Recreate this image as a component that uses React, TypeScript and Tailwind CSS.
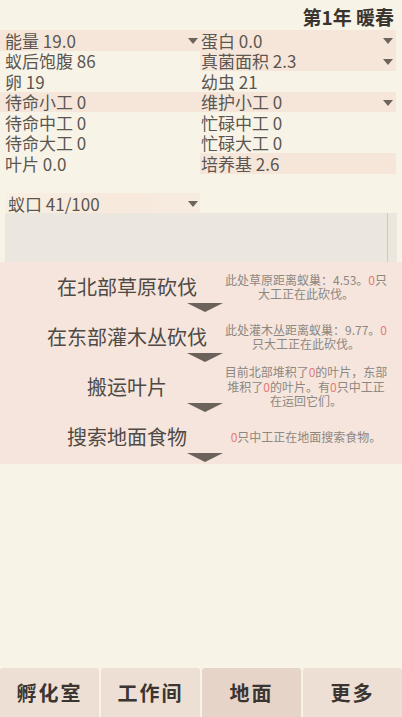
import React from "react";

const Tri = () => (
  <svg width="10" height="6" viewBox="0 0 10 6" className="block">
    <polygon points="0,0 10,0 5,6" fill="#6d655d" />
  </svg>
);

type Cell = { text: string; pink?: boolean; drop?: boolean };

const rows: [Cell, Cell][] = [
  [
    { text: "能量 19.0", pink: true, drop: true },
    { text: "蛋白 0.0", pink: true, drop: true },
  ],
  [{ text: "蚁后饱腹 86" }, { text: "真菌面积 2.3", pink: true, drop: true }],
  [{ text: "卵 19" }, { text: "幼虫 21" }],
  [
    { text: "待命小工 0", pink: true },
    { text: "维护小工 0", pink: true, drop: true },
  ],
  [{ text: "待命中工 0" }, { text: "忙碌中工 0" }],
  [{ text: "待命大工 0" }, { text: "忙碌大工 0" }],
  [{ text: "叶片 0.0" }, { text: "培养基 2.6", pink: true }],
];

const R = ({ children }: { children: React.ReactNode }) => (
  <span className="text-[#e8797a]">{children}</span>
);

const tasks: { title: string; desc: React.ReactNode }[] = [
  {
    title: "在北部草原砍伐",
    desc: (
      <>
        此处草原距离蚁巢：4.53。<R>0</R>只
        <br />
        大工正在此砍伐。
      </>
    ),
  },
  {
    title: "在东部灌木丛砍伐",
    desc: (
      <>
        此处灌木丛距离蚁巢：9.77。<R>0</R>
        <br />
        只大工正在此砍伐。
      </>
    ),
  },
  {
    title: "搬运叶片",
    desc: (
      <>
        目前北部堆积了<R>0</R>的叶片，东部
        <br />
        堆积了<R>0</R>的叶片。有<R>0</R>只中工正
        <br />
        在运回它们。
      </>
    ),
  },
  {
    title: "搜索地面食物",
    desc: (
      <>
        <R>0</R>只中工正在地面搜索食物。
      </>
    ),
  },
];

const nav = ["孵化室", "工作间", "地面", "更多"];

export default function App() {
  return (
    <div className="w-[402px] h-[717px] bg-[#f8f3e7] flex flex-col overflow-hidden font-['Noto_Sans_CJK_SC','Noto_Sans',sans-serif] text-[#5b5651]">
      <div className="h-[30px] flex justify-end items-center pr-[8px] pt-[3px] text-[19px] font-bold leading-none text-[#3a3430]">
        第1年 暖春
      </div>

      <div className="grid grid-cols-[200px_196px]">
        {rows.map((r, i) => (
          <React.Fragment key={i}>
            {r.map((c, j) => (
              <div
                key={j}
                className={`relative h-[20.5px] flex items-center text-[17px] leading-none ${
                  j === 0 ? "pl-[5px]" : "pl-[1px]"
                } ${c.pink ? "bg-[#f6e6da]" : ""}`}
              >
                <span>{c.text}</span>
                {c.drop && (
                  <span
                    className={`absolute top-[8px] ${
                      j === 0 ? "right-[2px]" : "right-[3px]"
                    }`}
                  >
                    <Tri />
                  </span>
                )}
              </div>
            ))}
          </React.Fragment>
        ))}
      </div>

      <div className="mt-[19.5px] ml-[5px] w-[195px] h-[20px] relative flex items-center pl-[3px] text-[17px] leading-none bg-gradient-to-r from-[#f8efe3] via-[#f7e9dc] to-[#f7ebdf]">
        <span>蚁口 41/100</span>
        <span className="absolute top-[8px] right-[2px]">
          <Tri />
        </span>
      </div>

      <div className="mx-[5px] h-[49px] bg-[#ebe7df] flex justify-end pr-[9px]">
        <div className="w-[1px] h-full bg-[#cfcac1]" />
      </div>

      <div className="bg-[#f5e5dc] pb-[2px]">
        {tasks.map((t, i) => (
          <div key={i} className="flex flex-col h-[50px]">
            <div className="h-[41px] pt-[9px] flex items-center">
              <div className="w-[220px] pl-[34px] text-center text-[20px] leading-[24px] text-[#4f4a45] whitespace-nowrap">
                {t.title}
              </div>
              <div className="w-[170px] ml-[1px] text-center text-[12px] leading-[14.5px] text-[#8d8782] whitespace-nowrap">
                {t.desc}
              </div>
            </div>
            <div className="h-[9px] pl-[187px]">
              <svg width="36" height="9" viewBox="0 0 36 9" className="block">
                <polygon points="0,0 36,0 18,9" fill="#6a625b" />
              </svg>
            </div>
          </div>
        ))}
      </div>

      <div className="flex-1" />

      <div className="h-[49px] grid grid-cols-4 gap-[2px]">
        {nav.map((n, i) => (
          <div
            key={n}
            className={`flex items-center justify-center rounded-t-[3px] text-[20px] font-bold tracking-[2px] text-[#3b3532] ${
              i === 2 ? "bg-[#e6d4c8]" : "bg-[#eedfd4]"
            }`}
          >
            {n}
          </div>
        ))}
      </div>
    </div>
  );
}
